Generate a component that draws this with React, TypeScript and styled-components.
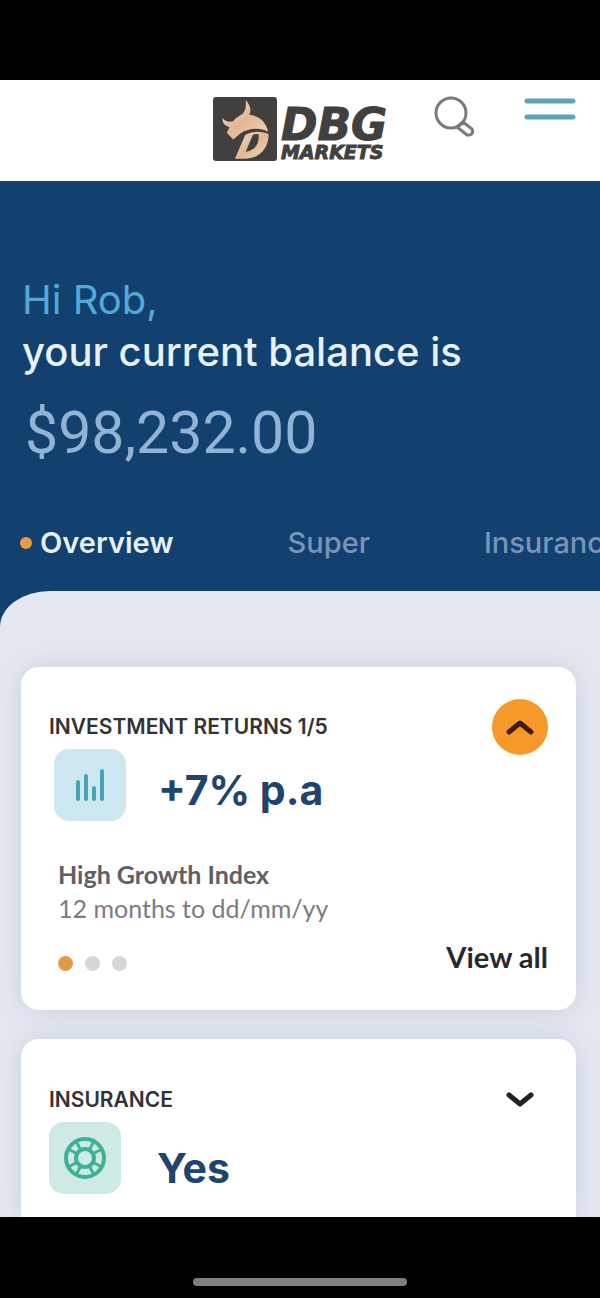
import React from "react";
import styled, { createGlobalStyle } from "styled-components";

const GlobalStyle = createGlobalStyle`
  * { box-sizing: border-box; }
  body { margin: 0; background: #000; font-family: Inter, "Liberation Sans", sans-serif; }
  h1, h2, p { margin: 0; }
  button { border: 0; padding: 0; background: none; font: inherit; color: inherit; cursor: pointer; }
  svg { display: block; }
`;

const Screen = styled.div`
  display: flex;
  flex-direction: column;
  min-height: 100vh;
  background: #000;
`;

const StatusBar = styled.div`
  height: 80px;
`;

const Header = styled.header`
  display: grid;
  grid-template-columns: 1fr auto 1fr;
  align-items: start;
  height: 101px;
  padding: 16px 23px 0;
  background: #fff;
`;

const Brand = styled.a`
  grid-column: 2;
  display: flex;
  align-items: center;
  gap: 4px;
  height: 66px;
  color: #42403e;
  text-decoration: none;
`;

const BrandName = styled.span`
  display: flex;
  flex-direction: column;
  padding-top: 8px;
  font-family: "DejaVu Sans", sans-serif;
  font-weight: 700;
  font-style: oblique;
`;

const BrandLine = styled.span<{ $size: number; $line: number }>`
  font-size: ${(p) => p.$size}px;
  line-height: ${(p) => p.$line}px;
  -webkit-text-stroke: 1px currentColor;
`;

const HeaderActions = styled.div`
  display: flex;
  align-items: flex-start;
  justify-content: flex-end;
  gap: 47px;
`;

const Hero = styled.section`
  display: flex;
  flex-direction: column;
  padding: 93px 0 32px 20px;
  overflow: hidden;
  background: #12406f;
  color: #e8f0fb;
`;

const Greeting = styled.h1`
  padding-left: 2px;
  font-size: 40px;
  line-height: 52px;
  font-weight: 500;
`;

const GreetingName = styled.span`
  display: block;
  font-weight: 400;
  color: #52a9d8;
`;

const Balance = styled.p`
  margin-top: 20px;
  padding-left: 5px;
  font-size: 59px;
  line-height: 70px;
  font-family: Roboto, sans-serif;
  font-weight: 400;
  color: #93b3d4;
`;

const Tabs = styled.nav`
  display: flex;
  gap: 114px;
  margin-top: 59px;
  white-space: nowrap;
`;

const Tab = styled.button<{ $active?: boolean }>`
  display: flex;
  align-items: center;
  gap: 8px;
  flex: none;
  font-size: 29px;
  line-height: 32px;
  font-weight: ${(p) => (p.$active ? 600 : 500)};
  color: ${(p) => (p.$active ? "#e8f0fb" : "#7895b7")};
`;

const Dot = styled.span<{ $size: number; $color: string }>`
  width: ${(p) => p.$size}px;
  height: ${(p) => p.$size}px;
  border-radius: 50%;
  background: ${(p) => p.$color};
`;

const ContentWrap = styled.div`
  display: flex;
  flex: 1;
  background: #12406f;
`;

const Content = styled.main`
  display: flex;
  flex: 1;
  flex-direction: column;
  gap: 29px;
  padding: 76px 24px 0 21px;
  overflow: hidden;
  border-radius: 50px 0 0 0 / 36px 0 0 0;
  background: #e4e8f1;
`;

const Card = styled.section<{ $last?: boolean }>`
  display: flex;
  flex-direction: column;
  flex: ${(p) => (p.$last ? 1 : "none")};
  padding: ${(p) => (p.$last ? "33px 28px 20px" : "32px 28px 36px")};
  border-radius: ${(p) => (p.$last ? "18px 18px 0 0" : "18px")};
  background: #fff;
  box-shadow: 0 0 28px #c8d0dc;
`;

const CardHead = styled.div`
  display: flex;
  align-items: center;
  justify-content: space-between;
  height: 50px;
  padding-top: 5px;
`;

const CardTitle = styled.h2`
  font-size: 21px;
  line-height: 26px;
  font-weight: 600;
  color: #333336;
`;

const Toggle = styled.button<{ $open?: boolean }>`
  display: flex;
  align-items: center;
  justify-content: center;
  width: 56px;
  height: 56px;
  border-radius: 50%;
  background: ${(p) => (p.$open ? "#f6982a" : "transparent")};
`;

const Metric = styled.div<{ $inset?: boolean }>`
  display: flex;
  align-items: center;
  gap: ${(p) => (p.$inset ? 32 : 36)}px;
  padding-left: ${(p) => (p.$inset ? 5 : 0)}px;
`;

const IconTile = styled.span<{ $color: string }>`
  display: flex;
  align-items: center;
  justify-content: center;
  width: 72px;
  height: 72px;
  border-radius: 15px;
  background: ${(p) => p.$color};
`;

const MetricValue = styled.span<{ $low?: boolean }>`
  padding-top: ${(p) => (p.$low ? 20 : 10)}px;
  font-size: 41px;
  line-height: 52px;
  font-weight: 700;
  color: #21446f;
`;

const Details = styled.div`
  padding: 36px 0 0 9px;
  font-family: Lato, sans-serif;
  font-size: 25px;
  line-height: 34px;
  color: #7c7c7f;
`;

const DetailName = styled.p`
  font-weight: 700;
  color: #606064;
`;

const CardFoot = styled.div`
  display: flex;
  align-items: center;
  justify-content: space-between;
  height: 34px;
  margin-top: 15px;
  padding-left: 9px;
`;

const Pager = styled.div`
  display: flex;
  gap: 12px;
  padding-top: 12px;
`;

const ViewAll = styled.a`
  font-family: Lato, sans-serif;
  font-size: 29px;
  line-height: 34px;
  font-weight: 700;
  color: #29292d;
  text-decoration: none;
`;

const HomeBar = styled.footer`
  display: flex;
  align-items: flex-end;
  justify-content: center;
  height: 81px;
  padding-bottom: 12px;
`;

const HomeIndicator = styled.span`
  width: 214px;
  height: 8px;
  border-radius: 4px;
  background: #7f7f7f;
`;

function BullLogo() {
  return (
    <svg width="64" height="64" viewBox="7 8 190 190" aria-hidden="true">
      <defs>
        <linearGradient id="copper" x1="0" y1="0" x2="1" y2="1">
          <stop offset="0" stopColor="#f8dcc2" />
          <stop offset="0.5" stopColor="#e2b794" />
          <stop offset="1" stopColor="#f6d6b8" />
        </linearGradient>
      </defs>
      <rect x="7" y="8" width="190" height="190" rx="9" fill="#42403e" />
      <path
        fill="url(#copper)"
        d="M104 17C117 32 122 46 115 61C143 63 166 82 170 111C146 98 113 100 88 116L67 134L48 114L56 97C43 94 34 85 35 70C43 80 54 83 67 80C73 70 84 66 95 58C104 48 106 34 104 17Z"
      />
      <path
        fill="url(#copper)"
        fillRule="evenodd"
        d="M103 120C124 109 148 109 172 118C173 160 145 190 106 191L72 191ZM125 121L104 171C133 168 146 143 142 118Q132 117 125 121Z"
      />
    </svg>
  );
}

function SearchIcon() {
  return (
    <svg width="42" height="42" viewBox="0 0 42 42" fill="none" stroke="#7b7b7b" strokeWidth="3">
      <circle cx="17" cy="17" r="15" />
      <path d="M23 31L29 26L38 33Q40 37 36 39L33 39Z" strokeLinejoin="round" />
    </svg>
  );
}

function MenuIcon() {
  return (
    <svg width="54" height="26" viewBox="0 0 54 26" stroke="#5fa3b9" strokeWidth="5" strokeLinecap="round">
      <path d="M4 5H50M4 21H50" />
    </svg>
  );
}

function Chevron({ up, color }: { up?: boolean; color: string }) {
  return (
    <svg width="28" height="16" viewBox="0 0 28 16" fill="none" stroke={color} strokeWidth="5" strokeLinecap="round" strokeLinejoin="round">
      <path d={up ? "M3 13L14 4L25 13" : "M3 3L14 12L25 3"} />
    </svg>
  );
}

function BarsIcon() {
  return (
    <svg width="32" height="34" viewBox="0 0 32 34" stroke="#47a3b8" strokeWidth="4" strokeLinecap="round">
      <path d="M4 14V31M12 8V31M20 20V31M28 3V31" />
    </svg>
  );
}

function LifebuoyIcon() {
  return (
    <svg width="44" height="44" viewBox="0 0 44 44" fill="none" stroke="#3fb096" strokeWidth="4">
      <circle cx="22" cy="22" r="19" />
      <circle cx="22" cy="22" r="9" />
      {[28, 62, 118, 152, 208, 242, 298, 332].map((angle) => (
        <path key={angle} d="M22 13V4" strokeWidth="3" transform={`rotate(${angle} 22 22)`} />
      ))}
    </svg>
  );
}

export default function App() {
  return (
    <>
      <GlobalStyle />
      <Screen>
        <StatusBar />
        <Header>
          <Brand href="#" aria-label="DBG Markets">
            <BullLogo />
            <BrandName>
              <BrandLine $size={44} $line={37}>DBG</BrandLine>
              <BrandLine $size={19} $line={18}>MARKETS</BrandLine>
            </BrandName>
          </Brand>
          <HeaderActions>
            <button type="button" aria-label="Search">
              <SearchIcon />
            </button>
            <button type="button" aria-label="Menu">
              <MenuIcon />
            </button>
          </HeaderActions>
        </Header>

        <Hero>
          <Greeting>
            <GreetingName>Hi Rob,</GreetingName>
            your current balance is
          </Greeting>
          <Balance>$98,232.00</Balance>
          <Tabs>
            <Tab type="button" $active>
              <Dot $size={12} $color="#eb9a45" />
              Overview
            </Tab>
            <Tab type="button">Super</Tab>
            <Tab type="button">Insurance</Tab>
          </Tabs>
        </Hero>

        <ContentWrap>
          <Content>
            <Card>
              <CardHead>
                <CardTitle>INVESTMENT RETURNS 1/5</CardTitle>
                <Toggle type="button" $open aria-label="Collapse investment returns">
                  <Chevron up color="#3d1c08" />
                </Toggle>
              </CardHead>
              <Metric $inset>
                <IconTile $color="#cde8f0">
                  <BarsIcon />
                </IconTile>
                <MetricValue>+7% p.a</MetricValue>
              </Metric>
              <Details>
                <DetailName>High Growth Index</DetailName>
                <p>12 months to dd/mm/yy</p>
              </Details>
              <CardFoot>
                <Pager>
                  <Dot $size={15} $color="#e39a45" />
                  <Dot $size={15} $color="#d6d6d6" />
                  <Dot $size={15} $color="#d6d6d6" />
                </Pager>
                <ViewAll href="#">View all</ViewAll>
              </CardFoot>
            </Card>

            <Card $last>
              <CardHead>
                <CardTitle>INSURANCE</CardTitle>
                <Toggle type="button" aria-label="Expand insurance">
                  <Chevron color="#222226" />
                </Toggle>
              </CardHead>
              <Metric>
                <IconTile $color="#cdebe4">
                  <LifebuoyIcon />
                </IconTile>
                <MetricValue $low>Yes</MetricValue>
              </Metric>
            </Card>
          </Content>
        </ContentWrap>

        <HomeBar>
          <HomeIndicator />
        </HomeBar>
      </Screen>
    </>
  );
}
